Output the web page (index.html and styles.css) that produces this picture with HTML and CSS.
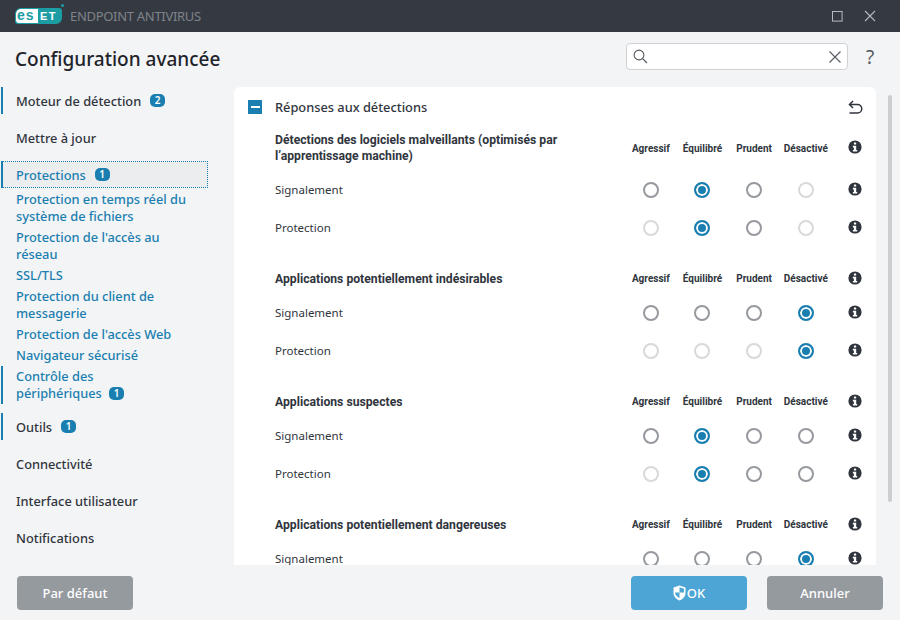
FILE: index.html
```html
<!DOCTYPE html>
<html lang="fr">
<head>
    <meta charset="UTF-8">
    <title>Configuration avancée</title>
    <link rel="stylesheet" href="styles.css">
</head>
<body>
<svg class="defs" width="0" height="0">
    <symbol id="info" viewBox="0 0 14 14">
        <circle cx="7" cy="7" r="6.6" fill="#30353d"/>
        <rect x="5.9" y="2.4" width="2.3" height="2.2" rx=".5" fill="#fff"/>
        <path d="M4.9 5.8h3.3v4.2h1v1.6H4.9V10h1V7.4h-1z" fill="#fff"/>
    </symbol>
</svg>

<div class="window">
    <div class="titlebar">
        <div class="brand">
            <div class="logo"><span class="logo-es">es</span><span class="logo-et">ET</span></div>
            <div class="product">ENDPOINT ANTIVIRUS</div>
        </div>
        <div class="win-buttons">
            <svg width="11" height="11" viewBox="0 0 11 11"><rect x=".5" y=".5" width="9.6" height="9.6" fill="none" stroke="#b6b9bd"/></svg>
            <svg width="12" height="12" viewBox="0 0 12 12"><path d="M1 1l10 10M11 1L1 11" stroke="#b6b9bd" stroke-width="1.1"/></svg>
        </div>
    </div>

    <div class="page-head">
        <h1>Configuration avancée</h1>
        <div class="search">
            <svg width="15" height="15" viewBox="0 0 15 15"><circle cx="6" cy="6" r="4.9" fill="none" stroke="#555a60" stroke-width="1.1"/><path d="M9.6 9.6l4.4 4.4" stroke="#555a60" stroke-width="1.3"/></svg>
            <svg width="12" height="12" viewBox="0 0 12 12"><path d="M.5.5l11 11M11.500.5l-11 11" stroke="#555a60" stroke-width="1.1"/></svg>
        </div>
        <div class="help">?</div>
    </div>

    <div class="main">
        <nav class="sidebar">
            <a class="nav-item marked">Moteur de détection <span class="badge">2</span></a>
            <a class="nav-item">Mettre à jour</a>
            <a class="nav-item marked current">Protections <span class="badge">1</span></a>
            <div class="subnav">
                <a class="sub-item">Protection en temps réel du système de fichiers</a>
                <a class="sub-item">Protection de l'accès au réseau</a>
                <a class="sub-item">SSL/TLS</a>
                <a class="sub-item">Protection du client de messagerie</a>
                <a class="sub-item">Protection de l'accès Web</a>
                <a class="sub-item">Navigateur sécurisé</a>
                <a class="sub-item marked">Contrôle des<br>périphériques <span class="badge">1</span></a>
            </div>
            <a class="nav-item marked">Outils <span class="badge">1</span></a>
            <a class="nav-item">Connectivité</a>
            <a class="nav-item">Interface utilisateur</a>
            <a class="nav-item">Notifications</a>
        </nav>

        <div class="content">
            <div class="card">
                <div class="card-title">
                    <span class="collapse"></span>
                    <span class="card-name">Réponses aux détections</span>
                    <svg class="revert" width="15" height="15" viewBox="0 0 15 15"><path d="M5 1L1.500 4.500 5 8" fill="none" stroke="#30353d" stroke-width="1.500"/><path d="M2 4.500h7.500a3.900 3.900 0 0 1 0 8.500H1.500" fill="none" stroke="#30353d" stroke-width="1.500"/></svg>
                </div>

                <div class="grid-row head tall">
                    <div class="label">Détections des logiciels malveillants (optimisés par l’apprentissage machine)</div>
                    <div class="col">Agressif</div><div class="col">Équilibré</div><div class="col">Prudent</div><div class="col">Désactivé</div>
                    <svg class="info"><use href="#info"/></svg>
                </div>
                <div class="grid-row">
                    <div class="label">Signalement</div>
                    <div class="col"><span class="radio"></span></div><div class="col"><span class="radio on"></span></div><div class="col"><span class="radio"></span></div><div class="col"><span class="radio off"></span></div>
                    <svg class="info"><use href="#info"/></svg>
                </div>
                <div class="grid-row end">
                    <div class="label">Protection</div>
                    <div class="col"><span class="radio off"></span></div><div class="col"><span class="radio on"></span></div><div class="col"><span class="radio"></span></div><div class="col"><span class="radio off"></span></div>
                    <svg class="info"><use href="#info"/></svg>
                </div>

                <div class="grid-row head">
                    <div class="label">Applications potentiellement indésirables</div>
                    <div class="col">Agressif</div><div class="col">Équilibré</div><div class="col">Prudent</div><div class="col">Désactivé</div>
                    <svg class="info"><use href="#info"/></svg>
                </div>
                <div class="grid-row">
                    <div class="label">Signalement</div>
                    <div class="col"><span class="radio"></span></div><div class="col"><span class="radio"></span></div><div class="col"><span class="radio"></span></div><div class="col"><span class="radio on"></span></div>
                    <svg class="info"><use href="#info"/></svg>
                </div>
                <div class="grid-row end">
                    <div class="label">Protection</div>
                    <div class="col"><span class="radio off"></span></div><div class="col"><span class="radio off"></span></div><div class="col"><span class="radio off"></span></div><div class="col"><span class="radio on"></span></div>
                    <svg class="info"><use href="#info"/></svg>
                </div>

                <div class="grid-row head">
                    <div class="label">Applications suspectes</div>
                    <div class="col">Agressif</div><div class="col">Équilibré</div><div class="col">Prudent</div><div class="col">Désactivé</div>
                    <svg class="info"><use href="#info"/></svg>
                </div>
                <div class="grid-row">
                    <div class="label">Signalement</div>
                    <div class="col"><span class="radio"></span></div><div class="col"><span class="radio on"></span></div><div class="col"><span class="radio"></span></div><div class="col"><span class="radio"></span></div>
                    <svg class="info"><use href="#info"/></svg>
                </div>
                <div class="grid-row end">
                    <div class="label">Protection</div>
                    <div class="col"><span class="radio off"></span></div><div class="col"><span class="radio on"></span></div><div class="col"><span class="radio"></span></div><div class="col"><span class="radio"></span></div>
                    <svg class="info"><use href="#info"/></svg>
                </div>

                <div class="grid-row head">
                    <div class="label">Applications potentiellement dangereuses</div>
                    <div class="col">Agressif</div><div class="col">Équilibré</div><div class="col">Prudent</div><div class="col">Désactivé</div>
                    <svg class="info"><use href="#info"/></svg>
                </div>
                <div class="grid-row">
                    <div class="label">Signalement</div>
                    <div class="col"><span class="radio"></span></div><div class="col"><span class="radio"></span></div><div class="col"><span class="radio"></span></div><div class="col"><span class="radio on"></span></div>
                    <svg class="info"><use href="#info"/></svg>
                </div>
            </div>
            <div class="scrollbar"><div class="thumb"></div></div>
        </div>
    </div>

    <div class="footer">
        <button class="btn">Par défaut</button>
        <div class="footer-right">
            <button class="btn primary">
                <svg width="13" height="16" viewBox="0 0 13 16"><path d="M6.500.5L12.500 2.500V8c0 3.500-2.600 6-6 7.500C3.100 14 .5 11.500.5 8V2.500z" fill="#fff"/><path d="M6.500 2.200v5.300H11V3.700zM6.500 7.500H2c.2 2.600 2 4.300 4.500 5.600z" fill="#4ca5d4"/></svg>OK
            </button>
            <button class="btn">Annuler</button>
        </div>
    </div>
</div>
</body>
</html>
```

FILE: styles.css
```css
body { margin: 0; font-family: "Noto Sans", sans-serif; font-size: 12.8px; color: #30353d; background-color: #f3f4f6; }
.defs { position: absolute; }
.window { width: 900px; height: 620px; display: flex; flex-direction: column; overflow: hidden; }

.titlebar { height: 32px; flex: none; display: flex; justify-content: space-between; align-items: center; background-color: #353a42; padding: 0 24px 0 15px; }
.brand { display: flex; align-items: center; gap: 8px; }
.logo { position: relative; display: flex; height: 16px; width: 47px; box-sizing: border-box; padding: 1px; border-radius: 6px 3px 6px 3px; background-color: #1c9ca3; font-family: "Liberation Sans", sans-serif; font-weight: bold; font-size: 14px; line-height: 12px; }
.logo::after { content: ""; position: absolute; right: -2px; top: -4px; width: 3px; height: 3px; border-radius: 50%; background-color: #1c9ca3; }
.logo-es { width: 22px; height: 14px; padding-left: 1px; box-sizing: border-box; letter-spacing: 1px; border-radius: 5px 0 0 3px; background-color: #fff; color: #1c9ca3; }
.logo-et { flex: 1; padding-left: 2px; font-size: 11px; line-height: 14px; letter-spacing: 1.5px; color: #fff; }
.product { font-size: 13px; color: #7f8389; letter-spacing: -0.3px; }
.win-buttons { display: flex; align-items: center; gap: 21px; }

.page-head { height: 55px; flex: none; display: flex; align-items: center; padding-left: 15px; }
h1 { margin: 0 0 2px; flex: 1; font-size: 19px; font-weight: 500; color: #1f232a; }
.search { display: flex; justify-content: space-between; align-items: center; padding: 0 6px; box-sizing: border-box; width: 222px; height: 27px; margin-bottom: 6px; background-color: #fff; border: 1px solid #cfd1d4; border-radius: 4px; }
.help { width: 44px; text-align: center; font-size: 19px; color: #555a60; margin: 0 8px 5px 0; }

.main { flex: 1; min-height: 0; display: flex; }
.sidebar { width: 234px; flex: none; }
.nav-item { display: flex; align-items: center; gap: 9px; width: 207px; height: 27px; box-sizing: border-box; margin: 0 0 10px 1px; padding-left: 15px; font-weight: 500; color: #30353d; }
.nav-item.marked, .sub-item.marked { border-left: 2px solid #1a7fb0; padding-left: 13px; }
.nav-item.current { margin-bottom: 0; color: #1a7fb0; background-color: #ecedef; outline: 1px dotted #1a7fb0; outline-offset: -1px; }
.subnav { padding-top: 1px; margin-bottom: 9px; }
.sub-item { display: block; width: 207px; box-sizing: border-box; margin-left: 1px; padding: 2px 10px 2px 15px; line-height: 17px; font-weight: 500; color: #1a7fb0; }
.badge { display: inline-block; width: 15px; height: 13px; line-height: 13px; border-radius: 5px; background-color: #1a7fb0; color: #fff; font-size: 10px; font-weight: 600; text-align: center; vertical-align: 1px; margin-left: 4px; }
.nav-item .badge { margin-left: 0; }

.content { flex: 1; display: flex; }
.card { width: 642px; height: 100%; box-sizing: border-box; padding-left: 14px; background-color: #fff; border-radius: 6px 6px 0 0; overflow: hidden; }
.card-title { height: 38px; margin-top: 1px; display: flex; align-items: center; }
.collapse { width: 14px; height: 14px; background-color: #1a7fb0; position: relative; flex: none; }
.collapse::after { content: ""; position: absolute; left: 3px; top: 6px; width: 9px; height: 2px; background-color: #fff; }
.card-name { flex: 1; margin-left: 13px; font-weight: 500; }
.revert { margin-right: 13px; }

.grid-row { display: grid; grid-template-columns: 350px repeat(4, 51.67px) 16px; align-items: center; height: 38px; padding-left: 27px; font-size: 11.5px; }
.grid-row .label { margin-bottom: 1px; }
.grid-row.end { margin-bottom: 17px; }
.grid-row.head { height: 30px; font-family: "Roboto", sans-serif; font-size: 12.2px; font-weight: 700; }
.grid-row.tall { height: 45px; }
.head .label { width: 285px; line-height: 16px; margin-bottom: 0; }
.tall .label { margin-bottom: 1px; }
.col { white-space: nowrap; font-size: 10px; display: flex; justify-content: center; align-items: center; }
.head .col { margin-bottom: 1px; }
.info { width: 14px; height: 14px; margin: 0 0 2px 16px; }
.head .info { margin-bottom: 3px; }
.radio { width: 16px; height: 16px; box-sizing: border-box; border: 2px solid #96999d; border-radius: 50%; background-color: #fff; }
.radio.off { border-color: #d8d9db; }
.radio.on { border-color: #1a7fb0; background-color: #1a7fb0; box-shadow: inset 0 0 0 2px #fff; }

.scrollbar { flex: 1; padding: 8px 8px 0 12px; }
.thumb { width: 4px; height: 407px; background-color: #cdced0; border-radius: 2px; }

.footer { height: 55px; flex: none; display: flex; justify-content: space-between; align-items: center; padding: 0 17px; }
.footer-right { display: flex; gap: 20px; }
.btn { width: 116px; height: 34px; display: flex; justify-content: center; align-items: center; gap: 1px; border: none; border-radius: 4px; background-color: #959a9f; color: #fff; font-family: inherit; font-size: 13px; font-weight: 500; }
.btn.primary { background-color: #4ca5d4; }
```
